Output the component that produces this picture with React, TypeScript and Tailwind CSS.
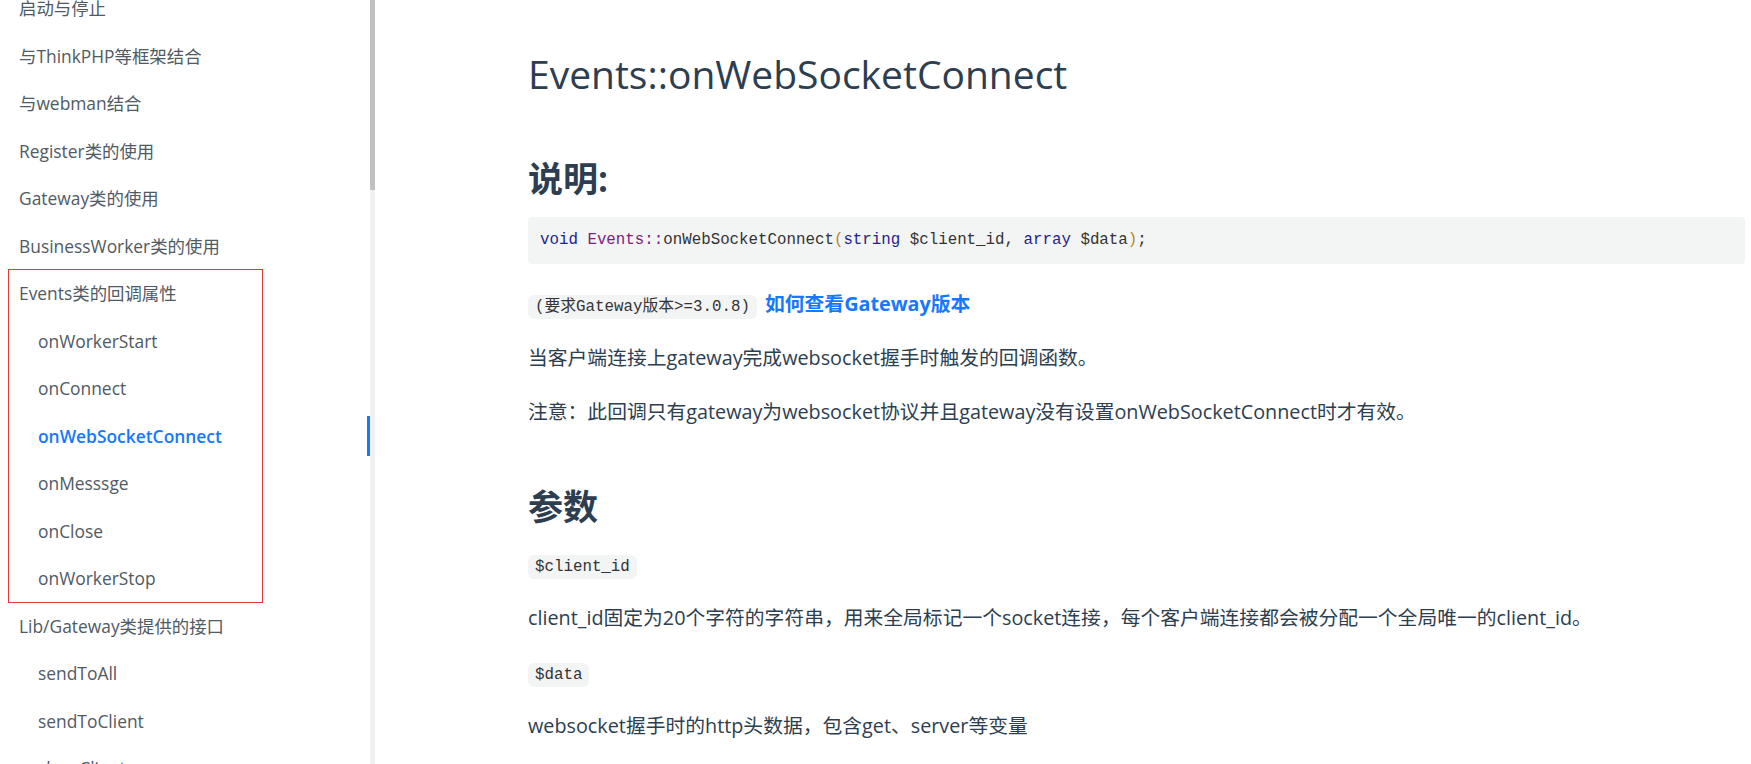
import React from 'react';

type NavItem = { label: string; sub?: boolean; active?: boolean };

const navTop: NavItem[] = [
  { label: '启动与停止' },
  { label: '与ThinkPHP等框架结合' },
  { label: '与webman结合' },
  { label: 'Register类的使用' },
  { label: 'Gateway类的使用' },
  { label: 'BusinessWorker类的使用' },
];

const navEvents: NavItem[] = [
  { label: 'Events类的回调属性' },
  { label: 'onWorkerStart', sub: true },
  { label: 'onConnect', sub: true },
  { label: 'onWebSocketConnect', sub: true, active: true },
  { label: 'onMesssge', sub: true },
  { label: 'onClose', sub: true },
  { label: 'onWorkerStop', sub: true },
];

const navBottom: NavItem[] = [
  { label: 'Lib/Gateway类提供的接口' },
  { label: 'sendToAll', sub: true },
  { label: 'sendToClient', sub: true },
  { label: 'closeClient', sub: true },
];

function NavRow({ item }: { item: NavItem }) {
  return (
    <li
      className={`relative flex h-[47.5px] items-center ${item.sub ? 'pl-[38px]' : 'pl-[19px]'} ${
        item.active ? 'font-semibold text-[#1677ff]' : 'text-[#505a64]'
      }`}
    >
      {item.label}
      {item.active && <span className="absolute right-0 top-[4px] h-[40px] w-[3px] bg-[#1677ff]" />}
    </li>
  );
}

function Code({ children }: { children: React.ReactNode }) {
  return (
    <code className="rounded-[6px] bg-[#f3f4f4] px-[7px] py-[3px] font-['Liberation_Mono','Noto_Sans_CJK_SC',monospace] text-[15.8px] leading-none text-[#333]">
      {children}
    </code>
  );
}

export default function App() {
  return (
    <div className="flex h-[764px] w-[1751px] overflow-hidden bg-white font-['Open_Sans','Noto_Sans_CJK_SC',sans-serif]">
      {/* Sidebar */}
      <aside className="flex w-[375px] shrink-0">
        <nav className="w-[370px] text-[17.4px]">
          <ul className="-mt-[15.5px]">
            {navTop.map((item) => (
              <NavRow key={item.label} item={item} />
            ))}
            <li className="relative">
              <ul>
                {navEvents.map((item) => (
                  <NavRow key={item.label} item={item} />
                ))}
              </ul>
              {/* annotation box */}
              <div className="pointer-events-none absolute -inset-y-[1px] left-[8px] w-[255px] border border-[#e53935]" />
            </li>
            {navBottom.map((item) => (
              <NavRow key={item.label} item={item} />
            ))}
          </ul>
        </nav>
        <div className="w-[5px] bg-[#f0f0f0]">
          <div className="h-[190px] bg-[#c1c1c1]" />
        </div>
      </aside>

      {/* Content */}
      <main className="flex-1 pl-[153px] pr-[6px] pt-[50px] text-[#2c3e50]">
        <h1 className="text-[39px] font-normal leading-[48px]">Events::onWebSocketConnect</h1>

        <h2 className="mt-[59px] text-[35px] font-bold leading-[44px]">说明:</h2>

        <pre className="mt-[16px] rounded-[4px] bg-[#f3f4f4] px-[12px] py-[12px] font-['Liberation_Mono',monospace] text-[15.8px] leading-[23px] text-[#333]">
          <span className="text-[#232390]">void</span>{' '}
          <span className="text-[#80207f]">Events::</span>onWebSocketConnect
          <span className="text-[#b5852f]">(</span>
          <span className="text-[#232390]">string</span> $client_id, <span className="text-[#232390]">array</span> $data
          <span className="text-[#b5852f]">)</span>;
        </pre>

        <p className="mt-[24.5px] text-[19.8px] leading-[30px]">
          <Code>(要求Gateway版本&gt;=3.0.8)</Code>{' '}
          <a href="#" className="ml-[3px] font-bold text-[#1677ff]">
            如何查看Gateway版本
          </a>
        </p>

        <p className="mt-[24px] text-[19.8px] leading-[30px]">当客户端连接上gateway完成websocket握手时触发的回调函数。</p>

        <p className="mt-[24px] text-[19.8px] leading-[30px]">
          注意：此回调只有gateway为websocket协议并且gateway没有设置onWebSocketConnect时才有效。
        </p>

        <h2 className="mt-[58px] text-[35px] font-bold leading-[44px]">参数</h2>

        <p className="mt-[20px] text-[19.8px] leading-[30px]">
          <Code>$client_id</Code>
        </p>

        <p className="mt-[24px] text-[19.8px] leading-[30px]">
          client_id固定为20个字符的字符串，用来全局标记一个socket连接，每个客户端连接都会被分配一个全局唯一的client_id。
        </p>

        <p className="mt-[24px] text-[19.8px] leading-[30px]">
          <Code>$data</Code>
        </p>

        <p className="mt-[24px] text-[19.8px] leading-[30px]">websocket握手时的http头数据，包含get、server等变量</p>
      </main>
    </div>
  );
}
